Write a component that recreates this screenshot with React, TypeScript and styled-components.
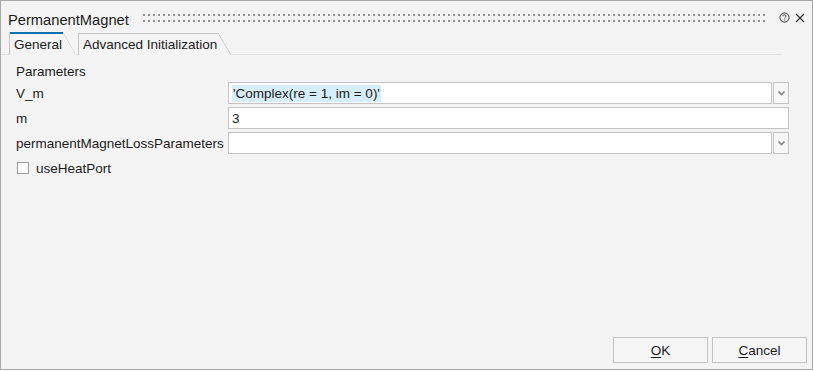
import React from 'react';
import styled, { createGlobalStyle, css } from 'styled-components';

const GlobalStyle = createGlobalStyle`
  body {
    margin: 0;
    background: #ffffff;
    font-family: 'Liberation Sans', Arial, sans-serif;
  }
`;

const Dialog = styled.div`
  box-sizing: border-box;
  width: 813px;
  height: 370px;
  border: 1px solid #a8a8a8;
  background: #f4f4f4;
  display: flex;
  flex-direction: column;
  color: #1b1b1b;
  font-size: 13.5px;
`;

const TitleBar = styled.div`
  height: 30px;
  display: flex;
  align-items: center;
  padding: 2px 6px 0 7px;
  box-sizing: border-box;
`;

const Title = styled.span`
  font-size: 14.7px;
  color: #1b1b1b;
  margin-top: 5px;
`;

// two rows of grip dots between the title and the buttons
const Grip = styled.div`
  flex: 1;
  height: 12px;
  margin: 2px 6px 0 13px;
  background-image: radial-gradient(circle at 2px 3px, #8f8f8f 1px, transparent 1.2px);
  background-size: 5px 6px;
`;

const IconButton = styled.span`
  display: flex;
  align-items: center;
  justify-content: center;
  width: 12px;
  height: 12px;
  margin: 1px 0 0 4px;
`;

const TabBar = styled.div`
  display: flex;
  align-items: flex-end;
  height: 23px;
  padding-left: 8px;
  margin-right: 30px;
  gap: 2px;
  border-bottom: 1px solid #e2e2e2;
`;

const slant = 13;

const Tab = styled.div<{ $active?: boolean }>`
  height: ${(p) => (p.$active ? 23 : 22)}px;
  box-sizing: border-box;
  display: flex;
  align-items: center;
  padding: ${(p) => (p.$active ? '1px' : '0')} ${slant + 1}px 0 4px;
  border-left: 1px solid #c6c6c6;
  margin-bottom: -1px;
  background-color: #f4f4f4;
  background-repeat: no-repeat;
  background-image:
    linear-gradient(${(p) => (p.$active ? '#0b6fb0, #0b6fb0' : '#c6c6c6, #c6c6c6')}),
    linear-gradient(
      to bottom left,
      transparent calc(50% - 0.7px),
      #c6c6c6 50%,
      transparent calc(50% + 0.7px)
    );
  background-size: calc(100% - ${slant}px) ${(p) => (p.$active ? 2 : 1)}px, ${slant}px 100%;
  background-position: left top, right top;
  ${(p) =>
    p.$active &&
    css`
      clip-path: polygon(0 0, calc(100% - ${slant}px) 0, 100% 100%, 0 100%);
    `}
`;

const Content = styled.div`
  flex: 1;
  display: flex;
  flex-direction: column;
  padding: 8px 23px 0 15px;
`;

const Section = styled.div`
  height: 16px;
  display: flex;
  align-items: center;
  margin-bottom: 3px;
`;

const Grid = styled.div`
  display: grid;
  grid-template-columns: 212px 1fr;
  row-gap: 3px;
`;

const Label = styled.div`
  display: flex;
  align-items: center;
  height: 22px;
  white-space: nowrap;
`;

const Field = styled.div`
  display: flex;
  height: 22px;
  gap: 1px;
`;

const Input = styled.div`
  flex: 1;
  box-sizing: border-box;
  border: 1px solid #c4c4c4;
  background: #ffffff;
  display: flex;
  align-items: center;
  padding-left: 3px;
`;

const Selected = styled.span`
  background: #d6eefa;
  padding: 1px 1px;
`;

const DropButton = styled.div`
  width: 16px;
  box-sizing: border-box;
  border: 1px solid #c4c4c4;
  background: #f7f7f7;
  display: flex;
  align-items: center;
  justify-content: center;
`;

const CheckRow = styled.label`
  display: flex;
  align-items: center;
  gap: 7px;
  height: 20px;
  margin-top: 4px;
  padding-left: 1px;
`;

const CheckBox = styled.span`
  width: 12px;
  height: 12px;
  box-sizing: border-box;
  border: 1px solid #9c9c9c;
  background: #ffffff;
`;

const Footer = styled.div`
  display: flex;
  justify-content: flex-end;
  gap: 4px;
  padding: 0 5px 6px 0;
`;

const Button = styled.button`
  width: 95px;
  height: 26px;
  box-sizing: border-box;
  border: 1px solid #c4c4c4;
  background: #f6f6f6;
  font-family: inherit;
  font-size: 13.5px;
  color: #1b1b1b;
  padding: 0;
  u {
    text-decoration: underline;
    text-underline-offset: 2px;
  }
`;

const Chevron = () => (
  <svg width="7" height="5" viewBox="0 0 7 5">
    <path d="M0.5 0.5 L3.5 3.5 L6.5 0.5" fill="none" stroke="#8a8a8a" strokeWidth="1.6" />
  </svg>
);

const HelpIcon = () => (
  <svg width="11" height="11" viewBox="0 0 11 11">
    <circle cx="5.5" cy="5.5" r="4.6" fill="none" stroke="#333" strokeWidth="1" />
    <path d="M3.9 4.3 C3.9 3.3 4.6 2.9 5.5 2.9 C6.4 2.9 7.1 3.4 7.1 4.2 C7.1 5.1 5.6 5.3 5.6 6.4" fill="none" stroke="#333" strokeWidth="1" />
    <circle cx="5.6" cy="8" r="0.6" fill="#333" />
  </svg>
);

const CloseIcon = () => (
  <svg width="10" height="10" viewBox="0 0 10 10">
    <path d="M1 1 L9 9 M9 1 L1 9" stroke="#333" strokeWidth="1.1" />
  </svg>
);

const rows = [
  { label: 'V_m', value: "'Complex(re = 1, im = 0)'", selected: true, drop: true },
  { label: 'm', value: '3', drop: false },
  { label: 'permanentMagnetLossParameters', value: '', drop: true },
];

export default function App() {
  return (
    <>
      <GlobalStyle />
      <Dialog>
        <TitleBar>
          <Title>PermanentMagnet</Title>
          <Grip />
          <IconButton>
            <HelpIcon />
          </IconButton>
          <IconButton>
            <CloseIcon />
          </IconButton>
        </TitleBar>
        <TabBar>
          <Tab $active>General</Tab>
          <Tab>Advanced Initialization</Tab>
        </TabBar>
        <Content>
          <Section>Parameters</Section>
          <Grid>
            {rows.map((row) => (
              <React.Fragment key={row.label}>
                <Label>{row.label}</Label>
                <Field>
                  <Input>{row.selected ? <Selected>{row.value}</Selected> : row.value}</Input>
                  {row.drop && (
                    <DropButton>
                      <Chevron />
                    </DropButton>
                  )}
                </Field>
              </React.Fragment>
            ))}
          </Grid>
          <CheckRow>
            <CheckBox />
            useHeatPort
          </CheckRow>
        </Content>
        <Footer>
          <Button>
            <u>O</u>K
          </Button>
          <Button>
            <u>C</u>ancel
          </Button>
        </Footer>
      </Dialog>
    </>
  );
}
